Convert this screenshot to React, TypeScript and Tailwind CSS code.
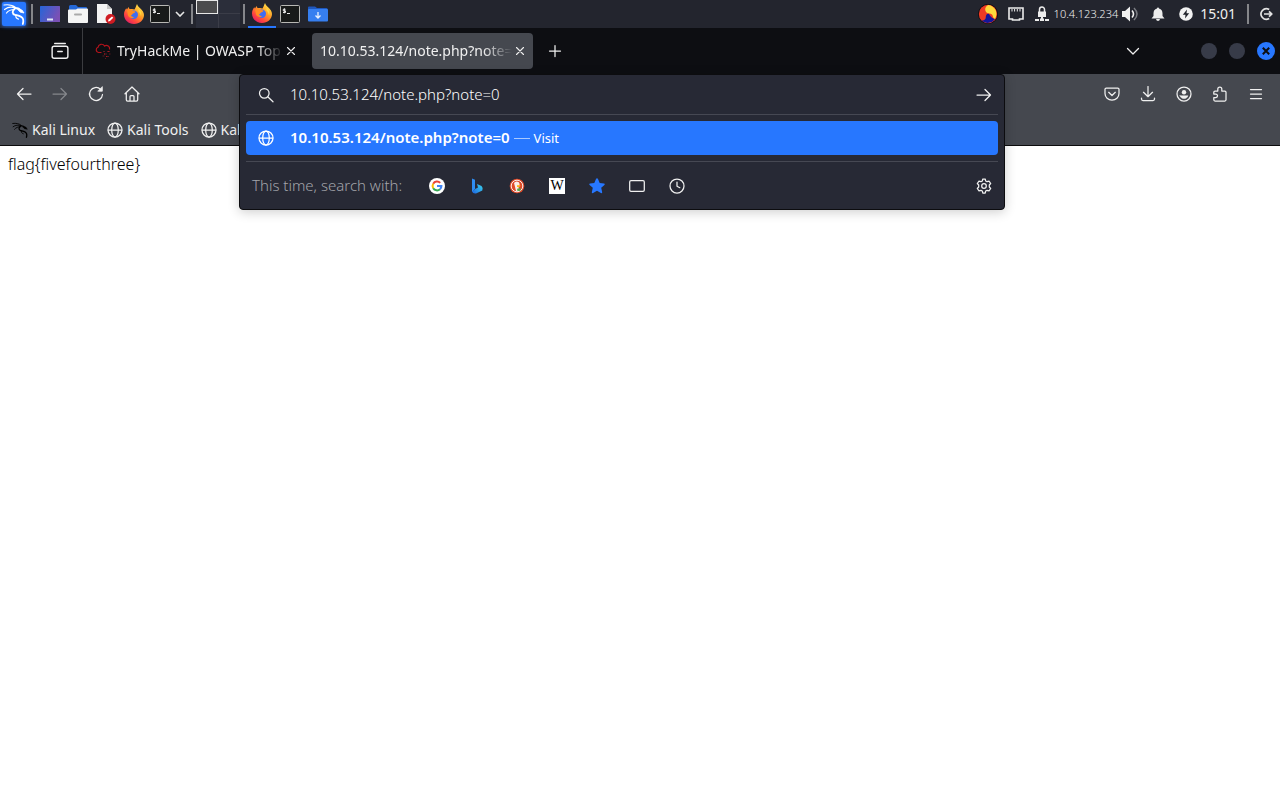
import type { ReactNode } from "react";

type IconProps = { className?: string };

/* ================= PANEL ICONS ================= */
function KaliIcon({ className }: IconProps) {
  return (
    <svg viewBox="0 0 22 22" className={className} fill="none" stroke="currentColor" strokeWidth="1.200" strokeLinecap="round">
      <path d="M1 2C6 1.300 10 2.300 12.500 4.500M1.500 6.500C5 4 9 3.800 12 5M3.500 10C5.500 7.500 8.500 6.500 11.500 6.500" />
      <path d="M12 5c3 0 5 1.200 6 3M11.500 6C9 8 9 11 12 11.800c3.500.9 7 1.200 8 4.200.5 1.800.3 3.500-.2 5" strokeWidth="1.800" />
      <path d="M15 6.500l4 .5 2 3-3.500-.800z" fill="currentColor" strokeWidth="0.800" />
      <path d="M13 12.200c-.5 2 .5 3.500 2.500 4" />
    </svg>
  );
}

function DesktopIcon() {
  return (
    <svg viewBox="0 0 20 16" className="h-4 w-5">
      <defs>
        <linearGradient id="desk" x1="0" y1="0" x2="1" y2="0.4">
          <stop offset="0" stopColor="#2565d8" />
          <stop offset="1" stopColor="#7a50b5" />
        </linearGradient>
      </defs>
      <rect width="20" height="16" rx="0.5" fill="url(#desk)" />
      <rect x="7" y="12.500" width="6" height="2" fill="#dfe5f5" />
    </svg>
  );
}

function FilesIcon() {
  return (
    <svg viewBox="0 0 20 18" className="h-[18px] w-5">
      <path d="M1 1.500Q1 0 2.500 0H8l2 2h8q1 0 1 1v6H1z" fill="#2468d9" />
      <path d="M0 5.500Q0 4.500 1 4.500h7l1.500-1H19q1 0 1 1V17q0 1-1 1H1q-1 0-1-1z" fill="#f4f4f4" />
      <rect x="6" y="8.500" width="8" height="2" rx="1" fill="#a9a9a9" />
    </svg>
  );
}

function TextFileIcon() {
  return (
    <svg viewBox="0 0 20 20" className="size-5">
      <path d="M1 0h10l5 5v14H1z" fill="#f3f3f3" />
      <path d="M11 0v5h5z" fill="#c6c6c6" />
      <circle cx="14.500" cy="15" r="5" fill="#cf1b22" />
      <path d="M12 17.500l.5-2 3.500-3 1.300 1.300-3.300 3.200z" fill="#fff" />
    </svg>
  );
}

function FirefoxIcon() {
  return (
    <svg viewBox="0 0 20 20" className="size-5">
      <defs>
        <linearGradient id="fox" x1="0.85" y1="0.1" x2="0.2" y2="0.95">
          <stop offset="0" stopColor="#ffe34a" />
          <stop offset="0.4" stopColor="#ff9a26" />
          <stop offset="0.75" stopColor="#ff453f" />
          <stop offset="1" stopColor="#e02065" />
        </linearGradient>
      </defs>
      <path d="M13 0c.5 2 2 3 3.400 4.500C18.500 6.600 20 8.500 20 11c0 5-4.500 9-10 9S0 16 0 10.500C0 8 .8 6 2.200 4.200L3 5.500 4.500 3l1 2c2 0 3-.5 5 .5C11.500 4 12 2 13 0z" fill="url(#fox)" />
      <circle cx="9.800" cy="10.800" r="4.200" fill="#3f6df2" />
      <path d="M3 6.500c2-1 4-1 5.500.2l3 .8c0 1.200-1.500 1.500-2.500 2-.8.800-.8 1.500-2 1.700.5 1.500 2 2 3.500 1.500-1.500 2-5.500 1.500-6.500-1.200z" fill="#ff8c22" />
      <path d="M14.500 4.500c2.500 2 3.500 5 2.500 8-.3-2-1-3.800-2.500-5z" fill="#ffd83d" />
    </svg>
  );
}

function TerminalIcon() {
  return (
    <svg viewBox="0 0 20 18" className="h-[18px] w-5">
      <rect x="0.5" y="0.5" width="19" height="17" rx="1" fill="#181a19" stroke="#b8b8b4" />
      <path d="M5.500 4.300H3.300v1.500h2.200v1.700H3M4.400 3.300v5M7 8.500h3" fill="none" stroke="#e8e8e8" />
    </svg>
  );
}

function DownloadFolderIcon() {
  return (
    <svg viewBox="0 0 20 16" className="h-4 w-5">
      <path d="M0 1.500Q0 .5 1 .5h6L9 2h9.500q1 0 1 1v5H0z" fill="#1f57bd" />
      <rect y="3" width="20" height="12.500" rx="1" fill="#367ff0" />
      <path d="M10 6v6M7.500 9.500 10 12l2.500-2.500" fill="none" stroke="#e9f1ff" strokeWidth="1.300" />
    </svg>
  );
}

function SwirlIcon() {
  return (
    <svg viewBox="0 0 20 20" className="size-5">
      <circle cx="10" cy="10" r="10" fill="#0c0c10" />
      <circle cx="10" cy="10" r="9.200" fill="#ee3b24" />
      <path d="M10.500 1A4.500 4.500 0 0 0 8.500 8.500C10 10 12.500 9 14 10.500c1.200 1.300.5 3.500 3 4.300A9 9 0 0 0 10.500 1z" fill="#ffd93b" />
      <path d="M17 15.300A9.200 9.200 0 0 1 3.500 16.500c3 .3 4.500-1.500 4.300-4 .2-2 1.700-3.300 3.200-2.500 1.500 3 4 4.500 6 5.300z" fill="#14179a" />
    </svg>
  );
}

function EthernetIcon() {
  return (
    <svg viewBox="0 0 16 14" className="h-[14px] w-4" fill="none" stroke="#ececec" strokeWidth="1.600">
      <path d="M1 1h14v11H11.500v1h-7v-1H1z" />
      <path d="M4 2v2.500M6.600 2v2.500M9.300 2v2.500M12 2v2.500" strokeWidth="1" />
    </svg>
  );
}

function VpnIcon() {
  return (
    <svg viewBox="0 0 16 16" className="size-4" fill="#ececec">
      <path d="M5.500 6V3.500a2.500 2.500 0 0 1 5 0V6" fill="none" stroke="#ececec" strokeWidth="1.500" />
      <path d="M4 5.500h8V11H4zM7 11h2v2H7zM1 13h4v2H1zM6 12.500h4V15H6zM11 13h4v2h-4z" />
    </svg>
  );
}

function VolumeIcon() {
  return (
    <svg viewBox="0 0 16 16" className="size-4" fill="none">
      <path d="M0 5h3l5-4.500v15L3 11H0z" fill="#f0f0f0" />
      <path d="M10 4.500q3 3.500 0 7" stroke="#f0f0f0" strokeWidth="1.600" />
      <path d="M12 2q6 6 0 12" stroke="#7a7c82" strokeWidth="1.500" />
    </svg>
  );
}

function BellIcon() {
  return (
    <svg viewBox="0 0 14 14" className="size-[14px]" fill="#ececec">
      <path d="M6 1.500a1 1 0 0 1 2 0c2.500.6 3.500 2.500 3.500 5V9l2 2.500H.5l2-2.500V6.500C2.500 4 3.500 2.100 6 1.500zM5 12h4q-.4 2-2 2t-2-2z" />
    </svg>
  );
}

function PowerIcon() {
  return (
    <svg viewBox="0 0 14 14" className="size-[14px]">
      <circle cx="7" cy="7" r="6.800" fill="#f2f2f2" />
      <path d="M8 2.500 3.800 7.800h2.700L6 11.500l4.200-5.300H7.500z" fill="#20222a" />
    </svg>
  );
}

function LogoutIcon() {
  return (
    <svg viewBox="0 0 14 14" className="size-[14px]" fill="none" stroke="#e2e2e2" strokeWidth="1.700">
      <path d="M10.200 2.500A5.300 5.300 0 1 0 10.200 11.500M5 7h7.500M10 4.300 12.700 7 10 9.700" />
    </svg>
  );
}

/* ================= BROWSER ICONS ================= */
// 16px line icon, most of the toolbar uses it
function Line({ children, className = "size-4" }: { children: ReactNode; className?: string }) {
  return (
    <svg viewBox="0 0 16 16" className={className} fill="none" stroke="currentColor" strokeWidth="1.250" strokeLinecap="round" strokeLinejoin="round">
      {children}
    </svg>
  );
}

function GlobeIcon() {
  return (
    <Line>
      <circle cx="8" cy="8" r="7" />
      <ellipse cx="8" cy="8" rx="3.300" ry="7" />
      <path d="M1.300 8h13.400" />
    </Line>
  );
}

function CloseX() {
  return (
    <Line>
      <path d="M4.500 4.500l7 7M11.500 4.500l-7 7" strokeWidth="1.100" />
    </Line>
  );
}

function TryHackMeIcon() {
  return (
    <svg viewBox="0 0 16 16" className="size-4" fill="none" stroke="#b3131b" strokeWidth="1.200">
      <path d="M6.500 9.500H3.500A2.700 2.700 0 0 1 3 4.300 3.500 3.500 0 0 1 9.500 3 3.200 3.200 0 0 1 14.500 6.500" />
      <path d="M8 8.500h2M12 8.500h3M9 11h3M14 11h1.500M7.500 13h2M11 13.500h3M10 15.500h1" stroke="#5b1a20" />
      <path d="M13 8.500h1M9 11h1M11 13.500h1" />
    </svg>
  );
}

function GoogleIcon() {
  return (
    <svg viewBox="0 0 16 16" className="size-4" fill="none" strokeWidth="2">
      <circle cx="8" cy="8" r="8" fill="#fff" />
      <path d="M4.200 5.800A4.400 4.400 0 0 1 11.200 4.900" stroke="#ea4335" />
      <path d="M4.200 10.200a4.400 4.400 0 0 1 0-4.400" stroke="#fbbc05" />
      <path d="M11 11.200a4.400 4.400 0 0 1-6.800-1" stroke="#34a853" />
      <path d="M8 8.100h4.400a4.400 4.400 0 0 1-1.400 3.100" stroke="#4285f4" />
    </svg>
  );
}

function BingIcon() {
  return (
    <svg viewBox="0 0 16 16" className="size-4">
      <defs>
        <linearGradient id="bing" x1="0" y1="1" x2="1" y2="0.3">
          <stop offset="0" stopColor="#1b5fe0" />
          <stop offset="1" stopColor="#37c9ee" />
        </linearGradient>
      </defs>
      <path d="M3 .5 6 1.700v9L3 14z" fill="#2f8df2" />
      <path d="M3 13.500 6 11l3-1.500-1-3.500 4.500 2q2 2 .8 4.500L7 15.500q-3 .5-4-2z" fill="url(#bing)" />
    </svg>
  );
}

function DuckIcon() {
  return (
    <svg viewBox="0 0 16 16" className="size-4">
      <circle cx="8" cy="8" r="7.300" fill="#de4a2a" />
      <circle cx="8" cy="8" r="5.800" fill="none" stroke="#fff" strokeWidth="0.900" />
      <path d="M5 5Q7 2.300 9.800 4.300 11 5.500 10.500 8l-1 1.500.8 3.300Q8 14 7 13L5.800 8z" fill="#fbeee9" />
      <path d="M8 7.300h3.700L10 9H8z" fill="#fdb913" />
      <path d="M8 10.800l3.500-.7v2.700L8.500 13z" fill="#51a84a" />
    </svg>
  );
}

function GearIcon() {
  return (
    <Line>
      <path d="M6.800 1h2.400l.5 2 1.300.7 2-.6 1.700 2.400-1.400 1.500v2l1.400 1.500-1.700 2.400-2-.6-1.300.7-.5 2H6.800l-.5-2-1.300-.7-2 .6-1.700-2.400L2.700 9V7L1.300 5.500 3 3.100l2 .6L6.300 3z" />
      <circle cx="8" cy="8" r="2.300" />
    </Line>
  );
}

/* ================= SMALL PARTS ================= */
function PanelButton({ label, children, wide = "w-7" }: { label: string; children: ReactNode; wide?: string }) {
  return (
    <button aria-label={label} className={`flex h-7 shrink-0 items-center justify-center ${wide}`}>
      {children}
    </button>
  );
}

function PanelDivider() {
  return (
    <span className="flex w-2 shrink-0 justify-center">
      <span className="h-5 w-0.5 bg-[#85868a]" />
    </span>
  );
}

function ToolButton({ label, children, dim }: { label: string; children: ReactNode; dim?: boolean }) {
  return (
    <button aria-label={label} className={`flex size-9 shrink-0 items-center justify-center ${dim ? "text-[#85878c]" : "text-[#f0f0f0]"}`}>
      {children}
    </button>
  );
}

export default function App() {
  const bookmarks = [
    { name: "Kali Linux", icon: <KaliIcon className="size-4 text-black" /> },
    { name: "Kali Tools", icon: <GlobeIcon /> },
    { name: "Kali Docs", icon: <GlobeIcon /> },
  ];

  const engines = [
    { name: "Google", icon: <GoogleIcon /> },
    { name: "Bing", icon: <BingIcon /> },
    { name: "DuckDuckGo", icon: <DuckIcon /> },
    {
      name: "Wikipedia",
      icon: (
        <span className="flex size-4 items-center justify-center bg-white font-['Liberation_Serif',serif] text-sm leading-4 text-black">W</span>
      ),
    },
    {
      name: "Bookmarks",
      icon: (
        <svg viewBox="0 0 16 16" className="size-4" fill="#2777ff">
          <path d="M8 .3q.7 0 1 .8l1.700 4 4.300.4q1.300.4.4 1.400L12.200 9.800l1 4.400q0 1.400-1.300.9L8 12.800l-3.900 2.300q-1.300.5-1.300-.9l1-4.400L.6 6.900Q-.3 5.900 1 5.500l4.300-.4 1.700-4q.3-.8 1-.8z" />
        </svg>
      ),
    },
    { name: "Tabs", icon: <Line><rect x="0.700" y="2.600" width="14.600" height="10.800" rx="1.300" /></Line> },
    { name: "History", icon: <Line><circle cx="8" cy="8" r="7" /><path d="M8 4v4.200l2.800 1.500" /></Line> },
  ];

  return (
    <div className="min-h-screen bg-white font-['Noto_Sans',sans-serif] text-sm text-[#f0f0f0]">
      {/* ================= DESKTOP PANEL ================= */}
      <header className="flex h-7 items-center bg-[#23252e]">
        <PanelButton label="Applications">
          <span className="flex size-6 items-center justify-center rounded-xs bg-[#2777ff] shadow-[0_0_4px_#2777ff]">
            <KaliIcon className="size-[22px] text-white" />
          </span>
        </PanelButton>
        <PanelDivider />
        <PanelButton label="Show desktop"><DesktopIcon /></PanelButton>
        <PanelButton label="Files"><FilesIcon /></PanelButton>
        <PanelButton label="Text editor"><TextFileIcon /></PanelButton>
        <PanelButton label="Firefox"><FirefoxIcon /></PanelButton>
        <PanelButton label="Terminal" wide="w-6"><TerminalIcon /></PanelButton>
        <PanelButton label="More terminals" wide="w-4">
          <svg viewBox="0 0 10 6" className="h-1.5 w-2.5" fill="none" stroke="#e6e6e6" strokeWidth="1.600">
            <path d="M1 1l4 4 4-4" />
          </svg>
        </PanelButton>
        <PanelDivider />
        <div className="grid h-7 w-11 shrink-0 grid-cols-2 grid-rows-2 bg-[#2b2e3a]">
          <button aria-label="Workspace 1" className="border border-[#e8e8e8] bg-[#4b4b4d]" />
          <button aria-label="Workspace 2" className="border-b border-l border-[#3b3d48]" />
          <button aria-label="Workspace 3" />
          <button aria-label="Workspace 4" className="border-l border-[#3b3d48]" />
        </div>
        <PanelDivider />
        <button aria-label="Firefox window" className="flex h-7 w-7 shrink-0 items-center justify-center border-b-2 border-[#2777ff]">
          <FirefoxIcon />
        </button>
        <PanelButton label="Terminal window"><TerminalIcon /></PanelButton>
        <PanelButton label="Downloads window"><DownloadFolderIcon /></PanelButton>

        <div className="ml-auto flex items-center">
          <PanelButton label="Input method"><SwirlIcon /></PanelButton>
          <PanelButton label="Network"><EthernetIcon /></PanelButton>
          <PanelButton label="VPN" wide="w-6"><VpnIcon /></PanelButton>
          <span className="text-[11px] font-light">10.4.123.234</span>
          <PanelButton label="Volume" wide="w-6"><VolumeIcon /></PanelButton>
          <PanelButton label="Notifications" wide="w-8"><BellIcon /></PanelButton>
          <PanelButton label="Power" wide="w-6"><PowerIcon /></PanelButton>
          <time className="pr-2 pl-0.5">15:01</time>
          <PanelDivider />
          <PanelButton label="Log out"><LogoutIcon /></PanelButton>
        </div>
      </header>

      {/* ================= TABS ================= */}
      <div className="flex h-[46px] items-center bg-[#0d0e12] pl-[42px]">
        <ToolButton label="Recent browsing">
          <Line className="size-[18px]">
            <path d="M3.300 1.300h9.400" />
            <rect x="1" y="3.800" width="14" height="10.700" rx="1.800" />
            <path d="M6 8.500h4" />
          </Line>
        </ToolButton>
        <span className="ml-1 h-full w-px bg-[#3b3c40]" />
        <div className="ml-1 flex h-9 w-[221px] items-center pl-2">
          <TryHackMeIcon />
          <span className="ml-1.5 w-[166px] overflow-hidden whitespace-nowrap mask-r-from-85%">TryHackMe | OWASP Top</span>
          <button aria-label="Close tab"><CloseX /></button>
        </div>
        <div className="ml-1 flex h-9 w-[221px] items-center rounded-sm bg-[#45484f] pl-2">
          <span className="w-[192px] overflow-hidden whitespace-nowrap mask-r-from-85%">10.10.53.124/note.php?note=</span>
          <button aria-label="Close tab"><CloseX /></button>
        </div>
        <span className="ml-1">
          <ToolButton label="New tab">
            <Line><path d="M8 2.500v11M2.500 8h11" /></Line>
          </ToolButton>
        </span>
        <div className="ml-auto flex items-center gap-3 pr-[5px]">
          <button aria-label="List all tabs" className="mr-12">
            <Line><path d="M2.500 5.500 8 11l5.500-5.500" /></Line>
          </button>
          <button aria-label="Minimize" className="size-4 rounded-full bg-[#373b48]" />
          <button aria-label="Maximize" className="size-4 rounded-full bg-[#373b48]" />
          <button aria-label="Close window" className="flex size-[18px] items-center justify-center rounded-full bg-[#2777ff]">
            <svg viewBox="0 0 8 8" className="size-2" stroke="#0d0e12" strokeWidth="2">
              <path d="M.8.8l6.400 6.400M7.200.8.8 7.200" />
            </svg>
          </button>
        </div>
      </div>

      {/* ================= TOOLBAR ================= */}
      <div className="border-b border-[#0c0c0d] bg-[#45484f]">
        <nav className="flex h-10 items-center px-1.5">
          <ToolButton label="Back"><Line><path d="M15 8H1.500M7 2.500 1.500 8 7 13.500" /></Line></ToolButton>
          <ToolButton label="Forward" dim><Line><path d="M1 8h13.500M9 2.500 14.500 8 9 13.500" /></Line></ToolButton>
          <ToolButton label="Reload">
            <Line>
              <path d="M14.500 8.500A6.500 6.500 0 1 1 12.500 3.300" />
              <path d="M14.300 1v4.200h-4.200z" fill="currentColor" strokeWidth="0.800" />
            </Line>
          </ToolButton>
          <ToolButton label="Home">
            <Line>
              <path d="M1 7.800 8 1l7 6.800M2.300 7v6.700q0 1.300 1.300 1.300h8.800q1.300 0 1.300-1.300V7M6 14.800V10.500q0-1 1-1h2q1 0 1 1v4.300" />
            </Line>
          </ToolButton>

          {/* address bar with its open suggestion list */}
          <div className="relative mx-[89px] h-full flex-1 text-[15px]">
            <div className="absolute inset-x-0 top-0 z-10 rounded-sm border border-[#0c0c0f] bg-[#272935] px-1.5 shadow-[0_2px_12px_rgba(0,0,0,0.2)]">
              <div className="flex h-10 items-center border-b border-[#464853] pl-3 pr-1.5">
                <Line><circle cx="6.300" cy="6.300" r="4.800" /><path d="M10 10l5 4.800" /></Line>
                <input aria-label="Address" defaultValue="10.10.53.124/note.php?note=0" className="ml-4 min-w-0 flex-1 bg-transparent font-light text-white outline-none" />
                <button aria-label="Go"><Line><path d="M1 8h13.500M9 2.500 14.500 8 9 13.500" /></Line></button>
              </div>
              <a href="#visit" className="my-1.5 flex h-[34px] items-center rounded-sm bg-[#2777ff] pl-3 text-white">
                <GlobeIcon />
                <span className="ml-4 font-semibold">10.10.53.124/note.php?note=0</span>
                <span className="ml-1 h-px w-4 bg-[#a9c9ff]" />
                <span className="ml-1 text-[13px]">Visit</span>
              </a>
              <div className="flex h-12 items-center border-t border-[#464853] pl-1.5 pr-1.5">
                <span className="w-[165px] font-light text-[#a3a4aa]">This time, search with:</span>
                {engines.map((engine) => (
                  <button key={engine.name} aria-label={engine.name} className="flex w-10 justify-center">
                    {engine.icon}
                  </button>
                ))}
                <button aria-label="Search settings" className="ml-auto"><GearIcon /></button>
              </div>
            </div>
          </div>

          <ToolButton label="Save to Pocket">
            <Line><path d="M2.300 2h11.400q1.300 0 1.300 1.300V7.500a7 6.700 0 0 1-14 0V3.300Q1 2 2.300 2zM4.700 6.300 8 9.500l3.300-3.200" /></Line>
          </ToolButton>
          <ToolButton label="Downloads">
            <Line><path d="M8 .500v10M3.500 6.300 8 10.700l4.500-4.400M1.500 12v1q0 1.500 1.500 1.500h10q1.500 0 1.500-1.500v-1" /></Line>
          </ToolButton>
          <ToolButton label="Account">
            <Line>
              <circle cx="8" cy="8" r="7" />
              <circle cx="8" cy="6.200" r="2.200" fill="currentColor" stroke="none" />
              <path d="M4 9.800h8Q11 12.600 8 12.600T4 9.800z" fill="currentColor" strokeWidth="0.500" />
            </Line>
          </ToolButton>
          <ToolButton label="Extensions">
            <Line>
              <path d="M5.800 5V3a2 2 0 0 1 4 0v2h3q1.200 0 1.200 1.200v7.600q0 1.200-1.200 1.200H3q-1.200 0-1.200-1.200V11.500h2a1.700 1.700 0 0 0 0-3.400h-2V6.200Q1.800 5 3 5z" />
            </Line>
          </ToolButton>
          <ToolButton label="Menu"><Line><path d="M2.500 3.500h11M2.500 8h11M2.500 12.500h11" /></Line></ToolButton>
        </nav>

        <ul className="flex h-[31px] items-center gap-3 px-3">
          {bookmarks.map((item) => (
            <li key={item.name}>
              <a href="#bookmark" className="flex items-center gap-1 whitespace-nowrap">
                {item.icon}
                {item.name}
              </a>
            </li>
          ))}
        </ul>
      </div>

      {/* ================= PAGE ================= */}
      <main className="p-2 text-base leading-5 font-light text-black">flag{"{"}fivefourthree{"}"}</main>
    </div>
  );
}
